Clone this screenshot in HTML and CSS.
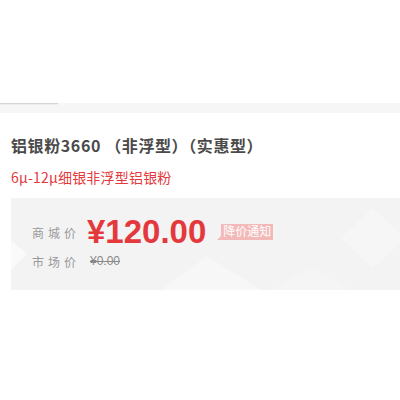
FILE: index.html
```html
<!DOCTYPE html>
<html lang="zh-CN">
<head>
  <meta charset="UTF-8">
  <title>铝银粉3660</title>
  <link rel="stylesheet" href="styles.css">
</head>
<body>

  <div class="tabs"><div class="tab-active"></div></div>

  <div class="info">
    <h1 class="title">铝银粉3660 （非浮型）（实惠型）</h1>
    <p class="subtitle">6μ-12μ细银非浮型铝银粉</p>

    <div class="price-box">
      <!-- faint background pattern -->
      <svg class="bg-pattern" width="400" height="92" viewBox="0 0 400 92">
        <polygon points="0,42 16,56 0,72" fill="#fafafa"/>
        <polygon points="150,92 196,58 250,92" fill="#f7f7f7"/>
        <polygon points="260,92 300,70 340,92" fill="#f5f5f5"/>
        <polygon points="330,40 362,10 394,40 362,70" fill="#f6f6f6"/>
      </svg>

      <div class="price-row">
        <span class="label">商城价</span>
        <span class="price">¥120.00</span>
        <span class="notify">降价通知</span>
      </div>
      <div class="price-row market">
        <span class="label">市场价</span>
        <span class="old-price">¥0.00</span>
      </div>
    </div>
  </div>

</body>
</html>
```

FILE: styles.css
```css
* { box-sizing: border-box; }
body {
  margin: 0;
  background: #fff;
  color: #333;
  font-family: "Liberation Sans", "Noto Sans CJK SC", sans-serif;
}
.tabs {
  margin-top: 103px;
  height: 10px;
  background: #f6f6f6;
}
.tab-active {
  width: 58px;
  height: 2px;
  border-top: 1px solid #d4d4d4;
  background: #eee;
}
.info {
  padding-left: 11px;
}
.title {
  margin: 20px 0 0;
  font-family: "Noto Sans CJK SC", sans-serif;
  font-size: 16px;
  line-height: 24px;
  font-weight: bold;
  letter-spacing: 0.6px;
  color: #4a4a4a;
}
.subtitle {
  margin: 10px 0 0;
  font-family: "Noto Sans CJK SC", sans-serif;
  font-size: 14px;
  line-height: 20px;
  letter-spacing: 0.2px;
  color: #e4393c;
}
.price-box {
  position: relative;
  margin-top: 11px;
  height: 92px;
  padding: 16px 0 0 21px;
  background: #f3f3f3;
  overflow: hidden;
}
.bg-pattern {
  position: absolute;
  left: 0;
  top: 0;
}
.price-row {
  position: relative;
  display: flex;
  align-items: center;
  height: 36px;
}
.price-row.market {
  height: 22px;
}
.label {
  width: 58px;
  font-size: 12px;
  letter-spacing: 4px;
  color: #999;
}
.price {
  margin-left: -3px;
  font-size: 33px;
  font-weight: bold;
  color: #e4393c;
}
.notify {
  position: relative;
  margin-left: 15px;
  padding: 0 2px;
  height: 16px;
  line-height: 16px;
  font-size: 12px;
  color: #fff;
  background: #f3b9b9;
}
.notify::before {
  content: "";
  position: absolute;
  left: -4px;
  bottom: 0;
  border-bottom: 4px solid #f3b9b9;
  border-left: 4px solid transparent;
}
.old-price {
  font-size: 12px;
  color: #888;
  text-decoration: line-through;
}
```
